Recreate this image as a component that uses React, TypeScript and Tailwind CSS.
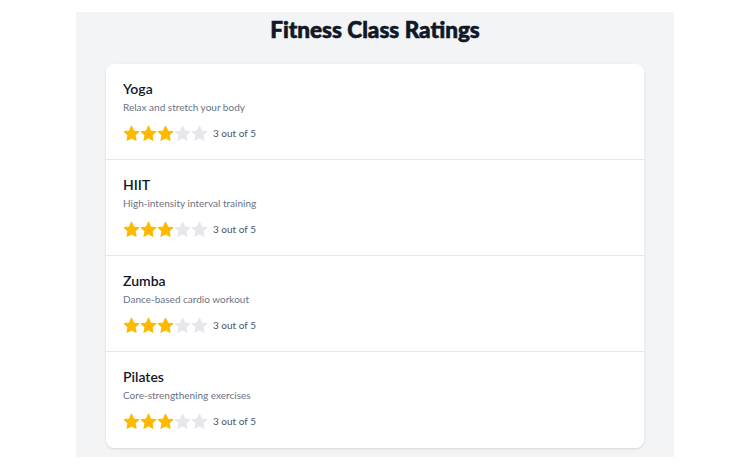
const classes = [
  { name: 'Yoga', description: 'Relax and stretch your body', rating: 3 },
  { name: 'HIIT', description: 'High-intensity interval training', rating: 3 },
  { name: 'Zumba', description: 'Dance-based cardio workout', rating: 3 },
  { name: 'Pilates', description: 'Core-strengthening exercises', rating: 3 },
]

function Star({ filled }: { filled: boolean }) {
  return (
    <svg
      viewBox="0 0 24 24"
      className={`w-[17px] h-[17px] ${filled ? 'text-amber-400' : 'text-gray-200'}`}
      fill="currentColor"
      stroke="currentColor"
      strokeWidth={1.5}
      strokeLinejoin="round"
    >
      <path d="M12 1.8l3.1 6.6 7.2.9-5.3 5 1.4 7.2L12 17.9l-6.4 3.6 1.4-7.2-5.3-5 7.2-.9z" />
    </svg>
  )
}

export default function App() {
  return (
    <div className="min-h-screen bg-white font-['Lato',sans-serif]">
      <div className="mx-auto mt-3 w-[598px] bg-gray-100 px-[30px] pb-[9px]">
        <h1 className="pt-[4px] text-center text-[22.5px] leading-[28px] font-black text-gray-900 [-webkit-text-stroke:0.6px_#111827]">
          Fitness Class Ratings
        </h1>
        <div className="mt-5 bg-white rounded-lg shadow-sm divide-y divide-gray-200">
          {classes.map((c) => (
            <div key={c.name} className="h-[96px] px-[17px] pt-4">
              <h2 className="text-[14px] leading-[18px] font-semibold text-gray-900">{c.name}</h2>
              <p className="text-[10px] leading-[18px] text-gray-500">{c.description}</p>
              <div className="mt-2 flex items-center h-[18px]">
                {[1, 2, 3, 4, 5].map((i) => (
                  <Star key={i} filled={i <= c.rating} />
                ))}
                <span className="ml-[5px] text-[10px] text-gray-600">{c.rating} out of 5</span>
              </div>
            </div>
          ))}
        </div>
      </div>
    </div>
  )
}
